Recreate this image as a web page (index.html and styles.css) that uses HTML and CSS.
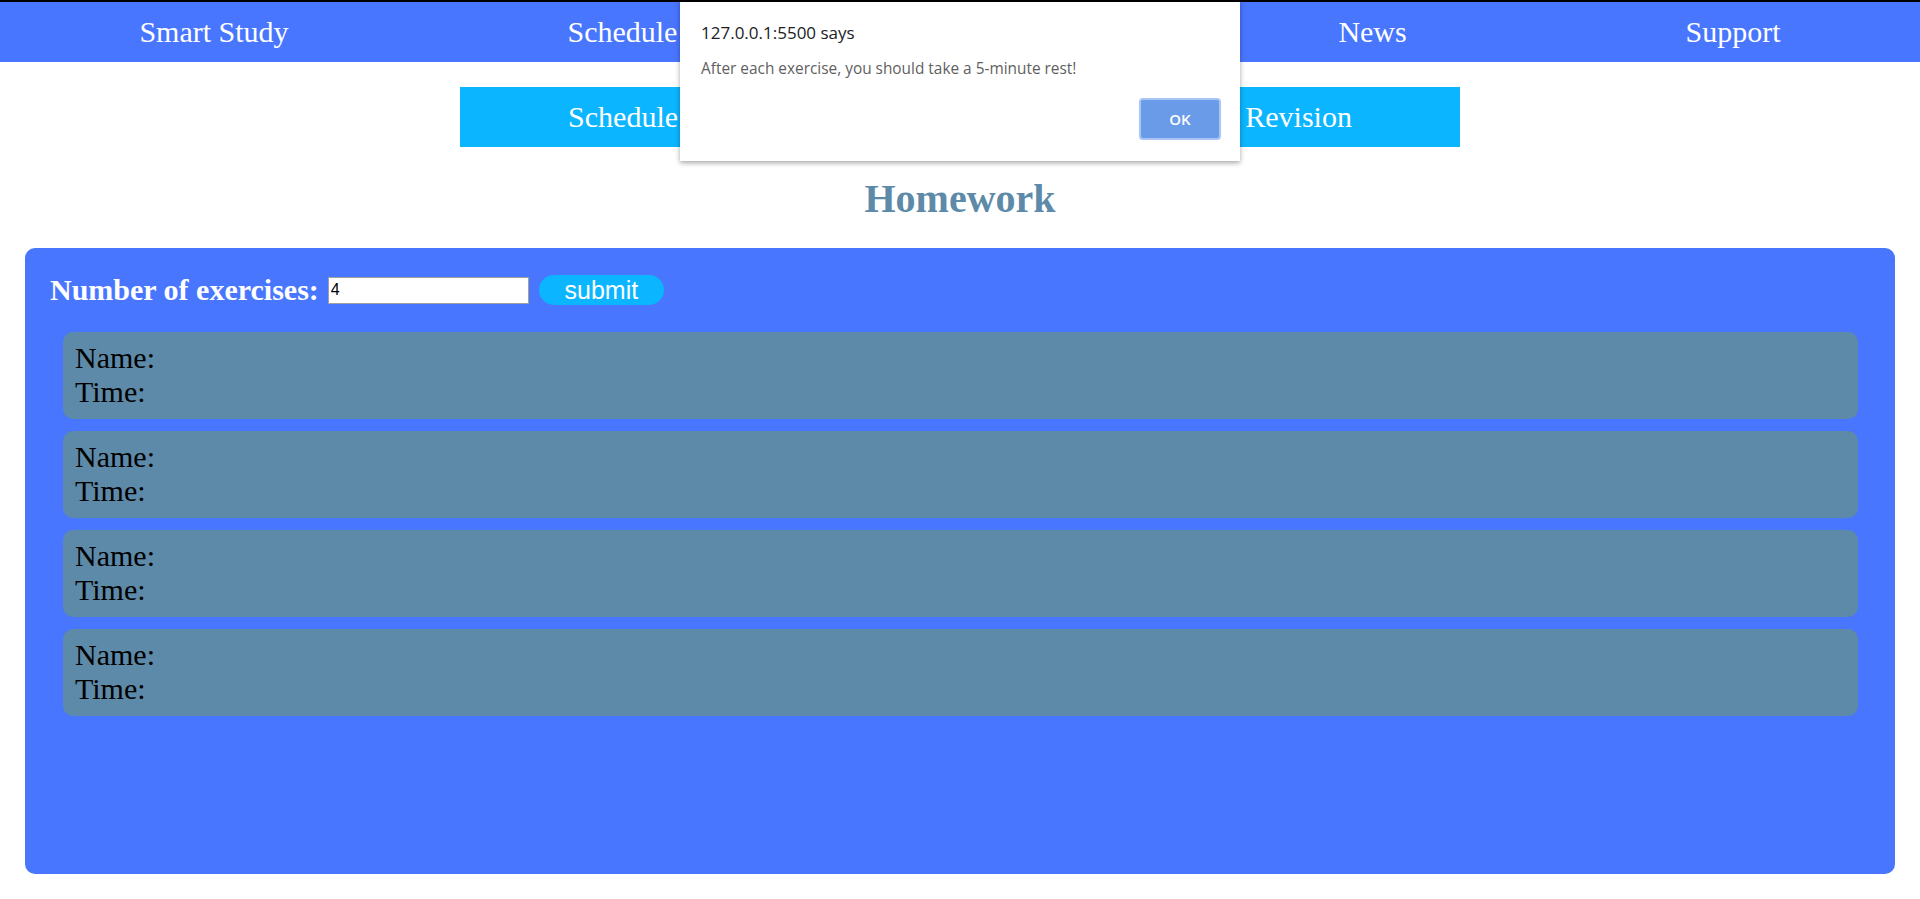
FILE: index.html
```html
<!DOCTYPE html>
<html lang="en">
<head>
<meta charset="utf-8">
<title>Homework - Smart Study</title>
<link rel="stylesheet" href="styles.css">
</head>
<body>
<nav class="main-nav">
  <a class="nav-link" href="#">Smart Study</a>
  <a class="nav-link" href="#">Schedule</a>
  <a class="nav-link" href="#">Exercise</a>
  <a class="nav-link" href="#">News</a>
  <a class="nav-link" href="#">Support</a>
</nav>
<nav class="sub-nav">
  <a class="nav-link" href="#">Schedule</a>
  <a class="nav-link" href="#">Homework</a>
  <a class="nav-link" href="#">Revision</a>
</nav>
<h1 class="page-title">Homework</h1>
<main class="panel">
  <form class="exercise-form">
    <label class="form-label" for="count">Number of exercises:</label>
    <input class="count-input" id="count" type="text" value="4">
    <button class="submit-btn" type="button">submit</button>
  </form>
  <div class="cards">
    <div class="card"><div class="card-line">Name:</div><div class="card-line">Time:</div></div>
    <div class="card"><div class="card-line">Name:</div><div class="card-line">Time:</div></div>
    <div class="card"><div class="card-line">Name:</div><div class="card-line">Time:</div></div>
    <div class="card"><div class="card-line">Name:</div><div class="card-line">Time:</div></div>
  </div>
</main>
<div class="alert-dialog" role="alertdialog">
  <div class="alert-title">127.0.0.1:5500 says</div>
  <div class="alert-message">After each exercise, you should take a 5-minute rest!</div>
  <div class="alert-actions">
    <button class="alert-ok" type="button">OK</button>
  </div>
</div>
</body>
</html>
```
FILE: styles.css
```css
html, body {
  margin: 0;
  padding: 0;
  background: #ffffff;
}
body {
  font-family: "Liberation Serif", "Times New Roman", serif;
  border-top: 2px solid #000000;
  height: 897px;
  overflow: hidden;
  position: relative;
}
.main-nav {
  display: flex;
  justify-content: space-around;
  align-items: center;
  height: 60px;
  background: #4876ff;
}
.nav-link {
  color: #ffffff;
  text-decoration: none;
  font-size: 30px;
}
.sub-nav {
  display: flex;
  justify-content: space-around;
  align-items: center;
  width: 1000px;
  height: 60px;
  margin: 25px auto 0;
  background: #0bb5ff;
}
.page-title {
  margin: 27.5px 0 26.5px;
  text-align: center;
  font-size: 40px;
  font-weight: bold;
  color: #5d8aa8;
}
.panel {
  box-sizing: border-box;
  height: 626px;
  margin: 0 25px;
  padding: 25px;
  background: #4876ff;
  border-radius: 10px;
}
.exercise-form {
  display: flex;
  align-items: center;
  margin: 0;
}
.form-label {
  font-size: 30px;
  font-weight: bold;
  color: #ffffff;
}
.count-input {
  box-sizing: border-box;
  width: 201px;
  height: 27px;
  margin: 0 0 0 9px;
  padding: 0 2px;
  border: 1px solid #a0a0a0;
  font-family: "Liberation Sans", Arial, sans-serif;
  font-size: 16px;
  color: #000000;
  background: #ffffff;
}
.submit-btn {
  box-sizing: border-box;
  width: 125px;
  height: 30px;
  margin-left: 10px;
  padding: 0;
  border: none;
  border-radius: 15px;
  background: #0bb5ff;
  color: #ffffff;
  font-family: "Liberation Sans", Arial, sans-serif;
  font-size: 25px;
  line-height: 30px;
}
.cards {
  display: flex;
  flex-direction: column;
  gap: 12px;
  margin: 24.5px 12px 0 13px;
}
.card {
  padding: 9.5px 12px;
  background: #5d8aa8;
  border-radius: 10px;
  font-size: 30px;
  color: #000000;
}
.alert-dialog {
  position: absolute;
  top: -2px;
  left: 680px;
  box-sizing: border-box;
  width: 560px;
  height: 161px;
  padding: 21px 19px 0 21px;
  background: #ffffff;
  box-shadow: 0 2px 5px rgba(0, 0, 0, 0.35);
  font-family: "Open Sans", "Noto Sans", sans-serif;
}
.alert-title {
  font-size: 17px;
  color: #202124;
}
.alert-message {
  margin-top: 13.5px;
  font-size: 15.4px;
  color: #5f5f5f;
}
.alert-actions {
  display: flex;
  justify-content: flex-end;
  margin-top: 19.5px;
}
.alert-ok {
  box-sizing: border-box;
  width: 82px;
  height: 42px;
  border: 2px solid #a9c5f5;
  border-radius: 4px;
  background: #6a9be8;
  color: #ffffff;
  font-family: "Open Sans", "Noto Sans", sans-serif;
  font-size: 15px;
  font-weight: 600;
}
```
